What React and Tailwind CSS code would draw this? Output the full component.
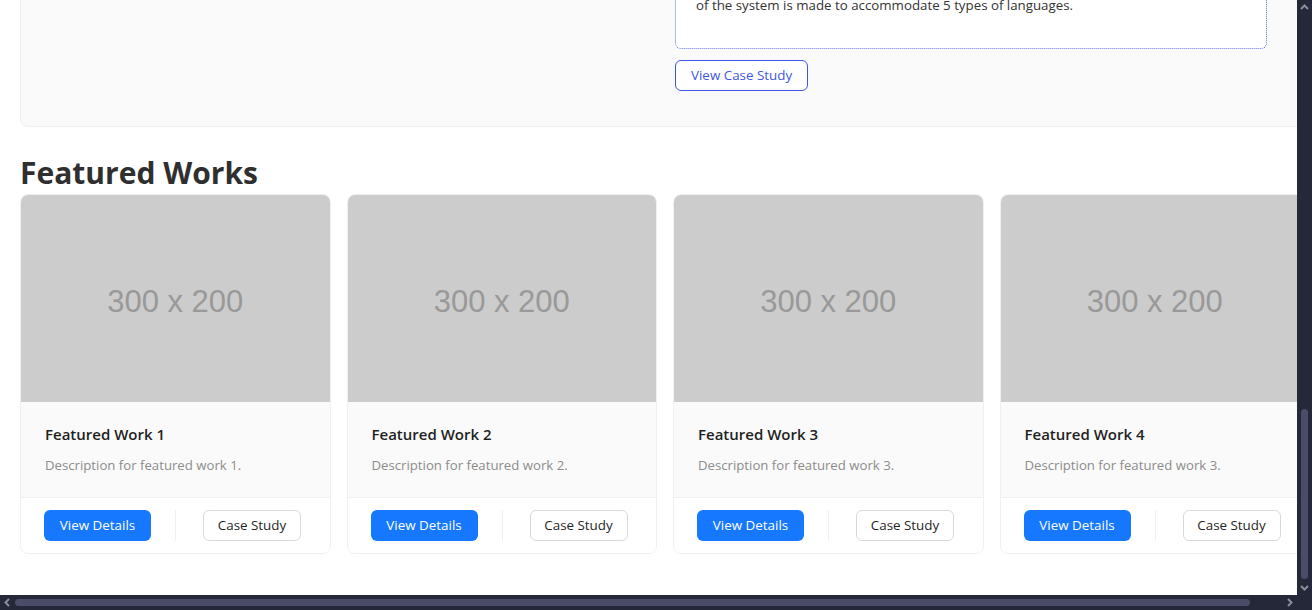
import React from "react";

const works = [
  { title: "Featured Work 1", desc: "Description for featured work 1." },
  { title: "Featured Work 2", desc: "Description for featured work 2." },
  { title: "Featured Work 3", desc: "Description for featured work 3." },
  { title: "Featured Work 4", desc: "Description for featured work 3." },
];

function WorkCard({ work }) {
  return (
    <div className="rounded-lg border border-[#f0f0f0] bg-white overflow-hidden">
      <div className="h-[207px] bg-[#cccccc] flex items-center justify-center pt-[7px]">
        <span className="text-[31px] text-[#999999] font-['Liberation_Sans',Arial,sans-serif]">
          300 x 200
        </span>
      </div>
      <div className="bg-[#fafafa] px-6 pt-[22px] pb-[21px]">
        <div className="text-[15px] leading-[20px] font-semibold text-[#1f1f1f]">
          {work.title}
        </div>
        <div className="mt-[10px] text-[13.2px] leading-[22px] text-[#8c8c8c]">
          {work.desc}
        </div>
      </div>
      <div className="border-t border-[#f0f0f0] bg-white py-3 pl-[23px] flex items-center">
        <button className="w-[107px] h-[31px] rounded-md bg-[#1677ff] text-white text-[13.4px]">
          View Details
        </button>
        <div className="ml-[24px] w-px h-[31px] bg-[#f0f0f0]" />
        <button className="ml-[27px] w-[98px] h-[31px] rounded-md border border-[#d9d9d9] bg-white text-[13.4px] text-[#1f1f1f]">
          Case Study
        </button>
      </div>
    </div>
  );
}

function Chevron({ dir }) {
  const pts = {
    up: "2,7 5.5,3.5 9,7",
    down: "2,4 5.5,7.5 9,4",
    left: "7,2 3.5,5.5 7,9",
    right: "4,2 7.5,5.5 4,9",
  }[dir];
  return (
    <svg width="11" height="11" viewBox="0 0 11 11">
      <polyline points={pts} fill="none" stroke="#8b8d9c" strokeWidth="2" />
    </svg>
  );
}

export default function App() {
  return (
    <div className="w-[1312px] h-[610px] flex flex-col bg-[#252838] overflow-hidden font-['Open_Sans','Noto_Sans',sans-serif]">
      <div className="flex flex-1 min-h-0">
        <div className="flex-1 min-w-0 bg-white overflow-hidden">
          <div className="w-[1330px] px-5 -mt-[40px]">
            {/* top case study card */}
            <div className="rounded-lg border border-[#f0f0f0] bg-[#fafafa] px-5 pt-5 pb-[35px] grid grid-cols-2 gap-5">
              <div />
              <div>
                <div className="w-[592px] h-[68px] rounded-md border border-dotted border-[#6272e6] bg-white pt-[12px] px-5 text-[13.3px] leading-[22px] text-[#333333]">
                  of the system is made to accommodate 5 types of languages.
                </div>
                <button className="mt-[11px] h-[31px] px-[15px] rounded-md border border-[#3d55e8] bg-white text-[13.4px] text-[#4256e4]">
                  View Case Study
                </button>
              </div>
            </div>

            <h2 className="mt-[27px] text-[30px] leading-[38px] font-bold text-[#2f2f2f]">
              Featured Works
            </h2>

            <div className="mt-[2px] grid grid-cols-4 gap-4 pb-10">
              {works.map((w) => (
                <WorkCard key={w.title} work={w} />
              ))}
            </div>
          </div>
        </div>

        {/* vertical scrollbar */}
        <div className="w-[15px] flex flex-col items-center bg-[#252838]">
          <div className="h-[15px] flex items-center justify-center">
            <Chevron dir="up" />
          </div>
          <div className="flex-1 w-full flex flex-col justify-end px-[4px] pb-[1px]">
            <div className="h-[170px] w-full rounded-full bg-[#4b4d68]" />
          </div>
          <div className="h-[15px] flex items-center justify-center">
            <Chevron dir="down" />
          </div>
        </div>
      </div>

      {/* horizontal scrollbar */}
      <div className="h-[15px] flex items-center bg-[#252838]">
        <div className="w-[15px] flex items-center justify-center">
          <Chevron dir="left" />
        </div>
        <div className="w-[1235px] h-[7px] rounded-full bg-[#4b4d68]" />
        <div className="flex-1" />
        <div className="w-[15px] flex items-center justify-center mr-[15px]">
          <Chevron dir="right" />
        </div>
      </div>
    </div>
  );
}
